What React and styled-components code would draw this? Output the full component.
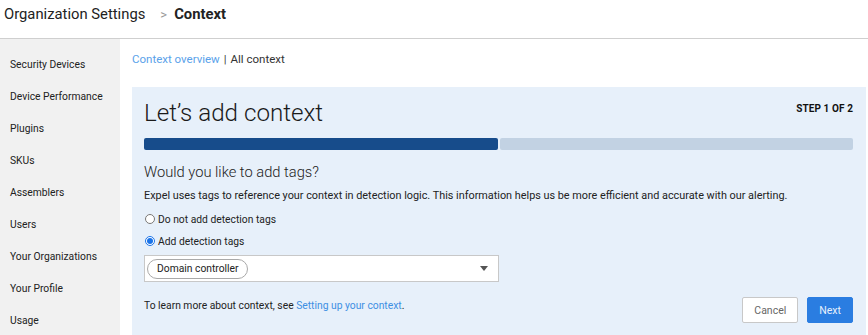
import React from "react";
import styled, { createGlobalStyle } from "styled-components";

const Global = createGlobalStyle`
  html, body { margin: 0; padding: 0; background: #fff; }
  body { font-family: Roboto, "Liberation Sans", Arial, sans-serif; color: #222; overflow: hidden; }
  * { box-sizing: border-box; }
`;

const Page = styled.div`
  display: flex;
  flex-direction: column;
  height: 335px;
  width: 868px;
`;

const Header = styled.header`
  height: 39px;
  flex: 0 0 39px;
  border-bottom: 1px solid #cfcfcf;
  display: flex;
  align-items: flex-start;
  padding: 0 4px;
  font-size: 14.8px;
  line-height: 29px;
`;

const Crumb = styled.span`
  color: #222;
  font-weight: ${(p) => (p.$bold ? 700 : 400)};
`;

const Chevron = styled.span`
  color: #999;
  font-size: 13px;
  margin: 0 7px 0 15px;
`;

const Body = styled.div`
  flex: 1;
  display: flex;
  min-height: 0;
`;

const Sidebar = styled.nav`
  width: 120px;
  flex: 0 0 120px;
  background: #f1f1f1;
  padding-top: 10px;
  display: flex;
  flex-direction: column;
`;

const NavItem = styled.div`
  height: 32px;
  line-height: 32px;
  padding-left: 10px;
  font-size: 10.3px;
  color: #222;
`;

const Main = styled.main`
  flex: 1;
  padding: 13px 2px 0 12px;
  display: flex;
  flex-direction: column;
  min-width: 0;
`;

const SubNav = styled.div`
  font-size: 11.5px;
  height: 14px;
  line-height: 14px;
  color: #333;
`;

const Link = styled.a`
  color: ${(p) => p.$color || "#3d8fe3"};
  text-decoration: none;
`;

const Sep = styled.span`
  margin: 0 4px;
  color: #444;
`;

const Panel = styled.section`
  margin-top: 21px;
  background: #e7f0fa;
  flex: 1;
  padding: 12px 13px 0 12px;
  display: flex;
  flex-direction: column;
`;

const TitleRow = styled.div`
  display: flex;
  justify-content: space-between;
  align-items: flex-start;
  height: 33px;
`;

const Title = styled.h1`
  margin: 0;
  font-size: 24.2px;
  font-weight: 300;
  line-height: 28px;
  color: #1a1a1a;
`;

const Step = styled.div`
  font-size: 10px;
  font-weight: 700;
  color: #111;
  margin-top: 4px;
  letter-spacing: 0.1px;
`;

const Progress = styled.div`
  display: flex;
  gap: 2px;
  height: 12px;
  margin-top: 6px;
`;

const Bar = styled.div`
  flex: 1;
  border-radius: 2px;
  background: ${(p) => (p.$done ? "#174c8b" : "#c2d2e3")};
`;

const Question = styled.h2`
  margin: 12px 0 0;
  font-size: 14.7px;
  font-weight: 300;
  color: #222;
  line-height: 20px;
`;

const Desc = styled.p`
  margin: 7px 0 0;
  font-size: 10.85px;
  line-height: 14px;
  color: #222;
`;

const RadioGroup = styled.div`
  display: flex;
  flex-direction: column;
  margin-top: 5px;
`;

const RadioLabel = styled.label`
  display: flex;
  align-items: center;
  height: 22px;
  font-size: 10.3px;
  color: #222;
`;

const RadioInput = styled.input`
  margin: 0 3px 0 1px;
  width: 10px;
  height: 10px;
  accent-color: #1a73e8;
`;

const Select = styled.div`
  margin-top: 3px;
  width: 355px;
  height: 27px;
  background: #fff;
  border: 1px solid #c8c8c8;
  display: flex;
  align-items: center;
  justify-content: space-between;
  padding: 0 10px 0 2px;
`;

const Chip = styled.span`
  height: 20px;
  border: 1px solid #a9a9a9;
  border-radius: 10px;
  padding: 0 8px 0 9px;
  font-size: 10.3px;
  line-height: 18px;
  color: #222;
`;

const Caret = styled.span`
  width: 0;
  height: 0;
  border-left: 4.5px solid transparent;
  border-right: 4.5px solid transparent;
  border-top: 5px solid #555;
`;

const Footer = styled.div`
  display: flex;
  align-items: flex-start;
  justify-content: space-between;
  margin-top: 15px;
`;

const Note = styled.p`
  margin: 2px 0 0;
  font-size: 10.3px;
  line-height: 14px;
  color: #222;
`;

const Buttons = styled.div`
  display: flex;
  gap: 9px;
`;

const Button = styled.button`
  height: 26px;
  padding: 0 11px;
  font-family: inherit;
  font-size: 10.5px;
  border-radius: 2px;
  border: 1px solid ${(p) => (p.$primary ? "#2a7de1" : "#c8c8c8")};
  background: ${(p) => (p.$primary ? "#2a7de1" : "#fff")};
  color: ${(p) => (p.$primary ? "#e8f1fc" : "#666")};
  cursor: pointer;
`;

const navItems = [
  "Security Devices",
  "Device Performance",
  "Plugins",
  "SKUs",
  "Assemblers",
  "Users",
  "Your Organizations",
  "Your Profile",
  "Usage",
];

export default function App() {
  return (
    <Page>
      <Global />
      <Header>
        <Crumb>Organization Settings</Crumb>
        <Chevron>&gt;</Chevron>
        <Crumb $bold>Context</Crumb>
      </Header>
      <Body>
        <Sidebar>
          {navItems.map((n) => (
            <NavItem key={n}>{n}</NavItem>
          ))}
        </Sidebar>
        <Main>
          <SubNav>
            <Link $color="#5aa2ea">Context overview</Link>
            <Sep>|</Sep>
            All context
          </SubNav>
          <Panel>
            <TitleRow>
              <Title>Let’s add context</Title>
              <Step>STEP 1 OF 2</Step>
            </TitleRow>
            <Progress>
              <Bar $done />
              <Bar />
            </Progress>
            <Question>Would you like to add tags?</Question>
            <Desc>
              Expel uses tags to reference your context in detection logic. This information helps us be more
              efficient and accurate with our alerting.
            </Desc>
            <RadioGroup>
              <RadioLabel>
                <RadioInput type="radio" name="tags" />
                Do not add detection tags
              </RadioLabel>
              <RadioLabel>
                <RadioInput type="radio" name="tags" defaultChecked />
                Add detection tags
              </RadioLabel>
            </RadioGroup>
            <Select>
              <Chip>Domain controller</Chip>
              <Caret />
            </Select>
            <Footer>
              <Note>
                To learn more about context, see <Link>Setting up your context</Link>.
              </Note>
              <Buttons>
                <Button>Cancel</Button>
                <Button $primary>Next</Button>
              </Buttons>
            </Footer>
          </Panel>
        </Main>
      </Body>
    </Page>
  );
}
